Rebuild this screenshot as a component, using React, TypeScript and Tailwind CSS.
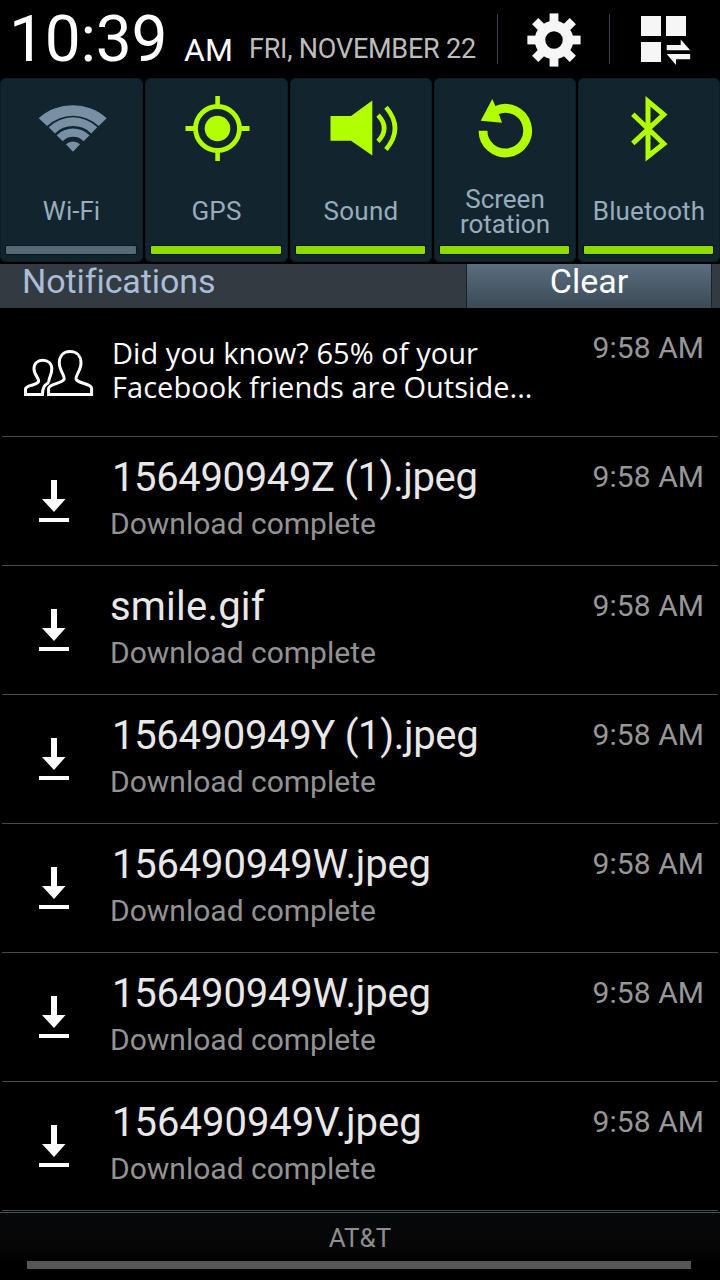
import type { ReactNode } from "react";

const GREEN = "#b2ff00";

const WifiIcon = () => (
  <svg viewBox="31.5 88 80 80" className="h-20 w-20 shrink-0" fill="#7890a4">
    <path d="M38.2 118.2A51 51 0 0 1 106.2 118.2L98.2 126A37.5 37.5 0 0 0 46.6 126Z" />
    <path d="M48.2 127.2A34.8 34.8 0 0 1 96.8 127.2L90.7 133.4A25.6 25.6 0 0 0 54.5 133.4Z" />
    <path d="M56.1 135.2A23.4 23.4 0 0 1 89.1 135.2L83 141.2A14.4 14.4 0 0 0 62.3 141.2Z" />
    <path d="M65.4 144.2A10.6 10.6 0 0 1 79.6 144.2L72.5 151.8Z" />
  </svg>
);

const GpsIcon = () => (
  <svg viewBox="176.5 88 80 80" className="h-20 w-20 shrink-0" fill={GREEN}>
    <circle cx="217" cy="128.5" r="12.8" />
    <circle cx="217" cy="128.5" r="22" fill="none" stroke={GREEN} strokeWidth="4.8" />
    <path d="M214.8 96h4.6v10h-4.6zM214.8 151h4.6v10h-4.6zM185 126h9.5v5H185zM239.5 126h9.5v5h-9.5z" />
  </svg>
);

const SoundIcon = () => (
  <svg viewBox="321 88 80 80" className="h-20 w-20 shrink-0" fill={GREEN}>
    <path d="M330.5 116H351L372.3 100.5V155.5L351 140.7H330.5Z" />
    <g fill="none" stroke={GREEN} strokeWidth="4.6">
      <path d="M378 115.2Q390.4 128.3 378 141.4" />
      <path d="M386 107.2Q404 128.3 386 149.4" />
    </g>
  </svg>
);

const RotationIcon = () => (
  <svg viewBox="465 88 80 80" className="h-20 w-20 shrink-0" fill={GREEN}>
    <path d="M483 130.7A22.3 22.3 0 1 0 496 110.4" fill="none" stroke={GREEN} strokeWidth="8.8" />
    <path d="M492.3 99L480.7 120.7L502 122.7L498.5 113Z" />
  </svg>
);

const BluetoothIcon = () => (
  <svg viewBox="609 88 80 80" className="h-20 w-20 shrink-0">
    <path
      d="M632.8 114.3L663.8 143.8L648 156.3V101.3L663.8 114.6L632.8 143.3"
      fill="none"
      stroke={GREEN}
      strokeWidth="5"
      strokeMiterlimit="10"
    />
  </svg>
);

const GearIcon = () => (
  <svg viewBox="-28 -28 56 56" className="h-14 w-14" fill="#f6f6f6">
    <circle r="14" fill="none" stroke="#f6f6f6" strokeWidth="10.5" />
    {[0, 45, 90, 135, 180, 225, 270, 315].map((a) => (
      <path key={a} d="M-4.4 -26.6H4.4V-16H-4.4Z" transform={`rotate(${a})`} />
    ))}
  </svg>
);

const PanelIcon = () => (
  <svg viewBox="640 15 52 52" className="h-[52px] w-[52px]" fill="#f6f6f6">
    <path d="M641 16h20v20h-20zM666 16h20v20h-20zM641 42h20v20h-20z" />
    <path d="M666.7 45H680.7V39.5L690.2 50.3H666.7ZM666.7 54H690.2V59.2H676V65Z" />
  </svg>
);

const FriendsIcon = () => (
  <svg viewBox="22 346 74 52" className="mt-[38px] ml-[22px] h-[52px] w-[74px]" fill="none" stroke="#fff" strokeWidth="3">
    <path d="M48.6 394.4V388.5C49 383.5 61 384 64 379.5C65.6 376 59.3 371 59.3 363C59.3 356 63.5 351.6 70 351.6C76.7 351.6 81 356 81 363C81 371 74.6 376 76.2 379.5C79.5 384 91.3 383.5 91.6 388.5V394.4Z" />
    <path d="M48.8 382.5C44.5 385 42.6 387.5 42.4 394.4H25.5V389C26 384.5 36.5 386 38.6 381.5C39.5 378.5 34 375 34 369C34 363.5 37.5 360.2 42.7 360.2C48 360.2 51.8 363.5 51.8 369C51.8 375 48.8 377 48.6 382.5" />
  </svg>
);

const DownloadIcon = () => (
  <svg viewBox="0 0 30 42" className="mt-[43px] ml-[39px] h-[42px] w-[30px]" fill="#fff">
    <path d="M12 0h6v19h8.5L15 32 3 19h9zM0 38h30v4H0z" />
  </svg>
);

type Toggle = { label: string; icon: ReactNode; on: boolean; tracking: string };

const toggles: Toggle[] = [
  { label: "Wi-Fi", icon: <WifiIcon />, on: false, tracking: "tracking-[0px]" },
  { label: "GPS", icon: <GpsIcon />, on: true, tracking: "tracking-[0.2px]" },
  { label: "Sound", icon: <SoundIcon />, on: true, tracking: "tracking-[0.3px]" },
  { label: "Screen rotation", icon: <RotationIcon />, on: true, tracking: "tracking-[0px]" },
  { label: "Bluetooth", icon: <BluetoothIcon />, on: true, tracking: "tracking-[0.1px]" },
];

const downloads = [
  { name: "156490949Z (1).jpeg", style: "pl-[2px] tracking-[-0.37px]" },
  { name: "smile.gif", style: "tracking-[0.2px]" },
  { name: "156490949Y (1).jpeg", style: "pl-[2px] tracking-[-0.33px]" },
  { name: "156490949W.jpeg", style: "pl-[2px] tracking-[-0.2px]" },
  { name: "156490949W.jpeg", style: "pl-[2px] tracking-[-0.2px]" },
  { name: "156490949V.jpeg", style: "pl-[2px] tracking-[0px]" },
];

const Row = ({ icon, children }: { icon: ReactNode; children: ReactNode }) => (
  <li className="mx-[2px] flex h-[129px] border-b border-[#4a4a4a]">
    <div className="-ml-[2px] w-[110px] shrink-0">{icon}</div>
    <div className="min-w-0 flex-1 whitespace-nowrap">{children}</div>
    <time className="mr-[14px] h-20 shrink-0 text-[30px] leading-[79px] tracking-[0.05px] text-[#979797]">9:58 AM</time>
  </li>
);

export default function App() {
  return (
    <div className="flex h-[1280px] w-[720px] flex-col overflow-hidden bg-black font-['Roboto',sans-serif]">
      <header className="flex h-[78px] shrink-0 whitespace-nowrap text-white">
        <div className="flex w-[497px] shrink-0 pl-[9px]">
          <span className="w-[175px] text-[64px] leading-[79px] tracking-[-0.2px]">10:39</span>
          <span className="w-[65px] text-[32px] leading-[100px]">AM</span>
          <span className="text-[27px] leading-[98px] tracking-[-0.22px] text-[#bdbdbd]">FRI, NOVEMBER 22</span>
        </div>
        <div className="mt-[14px] flex h-[50px] w-[112px] items-center justify-center border-l border-[#33434f] pt-[2px]">
          <GearIcon />
        </div>
        <div className="mt-[14px] flex h-[50px] w-[111px] items-center justify-center border-l border-[#33434f] pt-[4px] pl-[2px]">
          <PanelIcon />
        </div>
      </header>

      <section className="grid h-[184px] shrink-0 grid-cols-[143px_143px_142px_142px_142px] gap-[2px]">
        {toggles.map((t) => (
          <button key={t.label} className="flex flex-col items-center rounded-[6px] bg-[#12252f] pt-[10px] shadow-[inset_0_0_0_1px_#0e1e27]">
            {t.icon}
            <span className={`mt-[10px] flex h-[67px] items-center px-2 text-center text-[26px] leading-[25px] text-[#98acbb] ${t.tracking}`}>
              {t.label}
            </span>
            <span className="mt-[1px] w-full pr-[7px] pl-[6px]">
              <span className={`block h-2 rounded-[1px] shadow-[0_0_0_1px_#091820] ${t.on ? "bg-[#8edb00]" : "bg-[#566977]"}`} />
            </span>
          </button>
        ))}
      </section>

      <section className="mt-[2px] flex h-11 shrink-0 bg-[#323a42] whitespace-nowrap">
        <h2 className="flex-1 pl-[22px] text-[34px] leading-[35px] tracking-[-0.08px] text-[#abbdd7]">Notifications</h2>
        <button className="mr-[8px] flex w-[246px] justify-center border-x border-[#172129] bg-linear-to-b from-[#5b6d7f] to-[#3b4a55] text-[34px] leading-[35px] text-white">
          Clear
        </button>
      </section>

      <ul className="shrink-0">
        <Row icon={<FriendsIcon />}>
          <p className="pt-[28px] pl-[2px] font-['Open_Sans',sans-serif] text-[29px] leading-[34px] tracking-[0.04px] text-white">
            Did you know? 65% of your
            <br />
            Facebook friends are Outside...
          </p>
        </Row>
        {downloads.map((d, i) => (
          <Row key={i} icon={<DownloadIcon />}>
            <p className={`pt-[20px] text-[40px] leading-[41px] text-[#e8e8e8] ${d.style}`}>{d.name}</p>
            <p className="text-[30px] leading-[52px] text-[#939393]">Download complete</p>
          </Row>
        ))}
      </ul>

      <footer className="mt-[1px] flex h-[68px] shrink-0 flex-col border-t border-[#48525a] bg-linear-to-b from-[#05090b] via-[#060606] to-black">
        <p className="h-[48px] text-center text-[26px] leading-[50px] text-[#8e8e8e]">AT&amp;T</p>
        <div className="mr-[29px] ml-[27px] h-2 bg-[#565656]" />
      </footer>
    </div>
  );
}
